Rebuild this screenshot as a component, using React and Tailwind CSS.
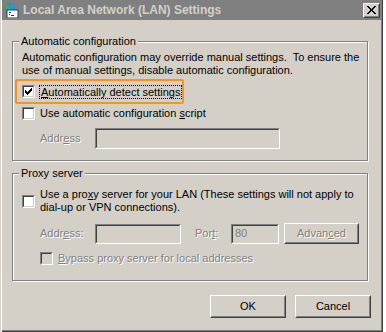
import React from "react";

const face = "bg-[#d4d0c8]";

function Check({ checked, disabled }) {
  return (
    <div className="w-[13px] h-[13px] shrink-0 border border-t-[#808080] border-l-[#808080] border-b-white border-r-white">
      <div
        className={`w-full h-full border border-t-[#404040] border-l-[#404040] border-b-[#d4d0c8] border-r-[#d4d0c8] flex items-center justify-center ${
          disabled ? "bg-[#d4d0c8]" : "bg-white"
        }`}
      >
        {checked && (
          <svg width="7" height="7" viewBox="0 0 7 7" shapeRendering="crispEdges">
            {[2, 3, 4, 3, 2, 1, 0].map((t, i) => (
              <rect key={i} x={i} y={t} width="1" height="3" fill="#000" />
            ))}
          </svg>
        )}
      </div>
    </div>
  );
}

function Field({ className, children }) {
  return (
    <div className={`border border-t-[#808080] border-l-[#808080] border-b-white border-r-white ${className}`}>
      <div className="h-full border border-t-[#404040] border-l-[#404040] border-b-[#d4d0c8] border-r-[#d4d0c8] bg-[#d4d0c8] flex items-center px-[2px] text-[#808080]">
        {children}
      </div>
    </div>
  );
}

function Btn({ className, children }) {
  return (
    <div className={`border border-t-white border-l-white border-b-[#404040] border-r-[#404040] ${className}`}>
      <div className="h-full border border-t-[#d4d0c8] border-l-[#d4d0c8] border-b-[#808080] border-r-[#808080] flex items-center justify-center">
        {children}
      </div>
    </div>
  );
}

function Dim({ children, className = "" }) {
  return (
    <span className={`whitespace-nowrap text-[#808080] [text-shadow:1px_1px_0_#fff] ${className}`}>{children}</span>
  );
}

function Group({ title, className, children }) {
  return (
    <div
      className={`relative ml-[12px] w-[356px] border border-[#808080] shadow-[inset_1px_1px_0_#fff,1px_1px_0_#fff] ${className}`}
    >
      <span className={`absolute left-[6px] top-[-7px] px-[2px] ${face} leading-[13px]`}>{title}</span>
      {children}
    </div>
  );
}

function LanIcon() {
  return (
    <svg width="16" height="16" viewBox="0 0 16 16">
      <circle cx="7" cy="6" r="5.5" fill="#2f8fd8" />
      <path d="M3 3 Q5 2 6 4 Q5 6 7 7 Q6 9 4 9 Q2 7 3 3 Z" fill="#3cb043" />
      <path d="M8 2 Q11 2 11 5 Q9 5 8 3 Z" fill="#3cb043" />
      <rect x="4" y="8" width="11" height="8" fill="#fff" stroke="#1e3c8c" strokeWidth="1" />
      <rect x="6" y="10" width="2" height="1" fill="#1e3c8c" />
      <rect x="6" y="12" width="1" height="1" fill="#1e3c8c" />
      <rect x="8" y="13" width="3" height="1" fill="#1e3c8c" />
    </svg>
  );
}

export default function App() {
  return (
    <div className="w-[386px] h-[332px] bg-[#ffffff] font-['Liberation_Sans',sans-serif] text-[11px] leading-[13px] text-black">
      <div
        className={`w-[383px] h-[332px] ${face} flex flex-col shadow-[inset_1px_0_0_#d4d0c8,inset_2px_0_0_#fff,inset_-1px_-1px_0_#404040,inset_-2px_-2px_0_#808080]`}
      >
        <div className="h-[20px] mx-[2px] bg-[#808080] flex items-center pl-[1px] pr-[1px]">
          <LanIcon />
          <span className="ml-[4px] font-bold text-[#d4d0c8] text-[12px] whitespace-nowrap">Local Area Network (LAN) Settings</span>
          <Btn className="ml-auto w-[17px] h-[15px] bg-[#d4d0c8]">
            <svg width="9" height="8" viewBox="0 0 9 8" shapeRendering="crispEdges">
              <path d="M0 0 L2 0 L4.5 3 L7 0 L9 0 L5.5 4 L9 8 L7 8 L4.5 5 L2 8 L0 8 L3.5 4 Z" fill="#000" />
            </svg>
          </Btn>
        </div>

        <Group title="Automatic configuration" className="mt-[21px] h-[120px]">
          <div className="pl-[9px] pt-[9px] whitespace-nowrap">
            Automatic configuration may override manual settings.&nbsp; To ensure the
            <br />
            use of manual settings, disable automatic configuration.
          </div>
          <div className="ml-[2px] mt-[2px] w-[169px] h-[25px] border-2 border-[#f7941d] rounded-[2px] flex items-center pl-[5px]">
            <Check checked />
            <span className="ml-[4px] px-[1px] border border-dotted border-black leading-[12px] whitespace-nowrap">
              <u>A</u>utomatically detect settings
            </span>
          </div>
          <div className="mt-[3px] ml-[9px] flex items-center">
            <Check />
            <span className="ml-[5px] whitespace-nowrap">
              Use automatic configuration <u>s</u>cript
            </span>
          </div>
          <div className="mt-[8px] ml-[27px] flex items-center">
            <Dim className="w-[55px]">
              Addr<u>e</u>ss
            </Dim>
            <Field className="w-[185px] h-[21px]" />
          </div>
        </Group>

        <Group title="Proxy server" className="mt-[12px] h-[108px]">
          <div className="mt-[14px] ml-[9px] flex items-center">
            <Check />
            <span className="ml-[5px] whitespace-nowrap">
              Use a pro<u>x</u>y server for your LAN (These settings will not apply to
              <br />
              dial-up or VPN connections).
            </span>
          </div>
          <div className="mt-[9px] ml-[27px] flex items-center">
            <Dim className="w-[55px]">
              Addr<u>e</u>ss:
            </Dim>
            <Field className="w-[86px] h-[20px]" />
            <Dim className="ml-[14px] w-[36px]">
              Por<u>t</u>:
            </Dim>
            <Field className="w-[48px] h-[20px]">80</Field>
            <Btn className="ml-[5px] w-[75px] h-[21px]">
              <Dim>
                Advan<u>c</u>ed
              </Dim>
            </Btn>
          </div>
          <div className="mt-[8px] ml-[27px] flex items-center">
            <Check disabled />
            <Dim className="ml-[5px]">
              <u>B</u>ypass proxy server for local addresses
            </Dim>
          </div>
        </Group>

        <div className="mt-[14px] flex ml-[210px] gap-[9px]">
          <Btn className="w-[76px] h-[23px]">OK</Btn>
          <Btn className="w-[76px] h-[23px]">Cancel</Btn>
        </div>
      </div>
    </div>
  );
}
